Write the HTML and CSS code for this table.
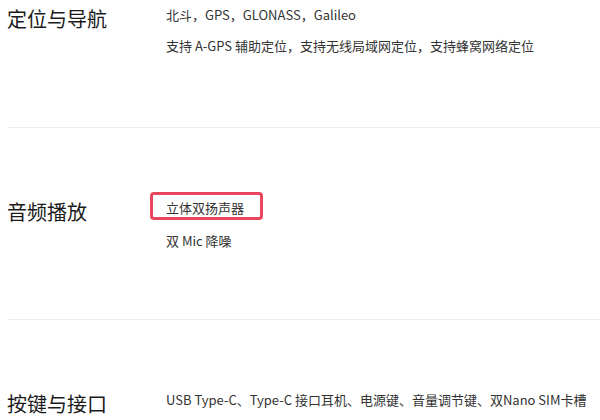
FILE: index.html
```html
<!DOCTYPE html>
<html lang="zh-CN">
<head>
<meta charset="utf-8">
<title>规格参数</title>
<link rel="stylesheet" href="styles.css">
</head>
<body>
<div class="specs">
  <section class="spec spec-first">
    <h3 class="spec-title">定位与导航</h3>
    <ul class="spec-list">
      <li>北斗，GPS，GLONASS，Galileo</li>
      <li>支持 A-GPS 辅助定位，支持无线局域网定位，支持蜂窝网络定位</li>
    </ul>
  </section>
  <section class="spec">
    <h3 class="spec-title">音频播放</h3>
    <ul class="spec-list">
      <li class="highlight">立体双扬声器</li>
      <li>双 Mic 降噪</li>
    </ul>
  </section>
  <section class="spec">
    <h3 class="spec-title">按键与接口</h3>
    <ul class="spec-list">
      <li>USB Type-C、Type-C 接口耳机、电源键、音量调节键、双Nano SIM卡槽</li>
    </ul>
  </section>
</div>
</body>
</html>
```

FILE: styles.css
```css
html, body {
  margin: 0;
  padding: 0;
  background: #fff;
}

body {
  font-family: "Noto Sans CJK SC", "Noto Sans", sans-serif;
  color: #333;
  overflow: hidden;
}

.specs {
  margin-left: 7px;
}

.spec {
  display: grid;
  grid-template-columns: 159px 1fr;
  align-items: start;
  padding: 70px 0 68px;
  border-bottom: 1px solid #ececec;
}

.spec-first {
  padding-top: 5px;
  padding-bottom: 71px;
}

.spec-title {
  margin: 0;
  padding-top: 4px;
  font-size: 20px;
  line-height: 20px;
  font-weight: 400;
  color: #1a1a1a;
}

.spec-list {
  list-style: none;
  margin: 0;
  padding: 0;
  display: flex;
  flex-direction: column;
  gap: 11px;
  font-size: 13px;
  line-height: 20px;
  color: #333;
}

.spec-list li {
  white-space: nowrap;
}

.highlight {
  position: relative;
  margin-bottom: 2px;
}

.highlight::after {
  content: "";
  position: absolute;
  left: -16px;
  top: -6px;
  width: 113px;
  height: 28px;
  box-sizing: border-box;
  border: 3px solid #e8465c;
  border-radius: 4px;
}
```
